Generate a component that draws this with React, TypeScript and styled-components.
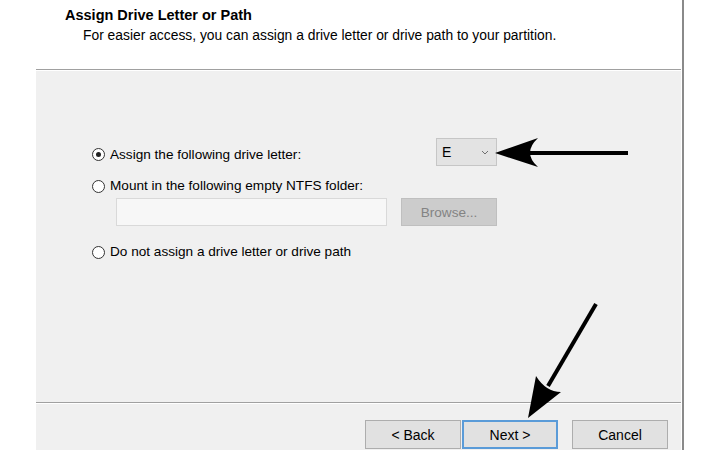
import React from "react";
import styled, { createGlobalStyle } from "styled-components";

const Global = createGlobalStyle`
  html, body { margin: 0; padding: 0; background: #ffffff; }
  body { font-family: "Liberation Sans", Arial, sans-serif; font-size: 13.6px; color: #000; }
  #root { width: 720px; height: 450px; overflow: hidden; position: relative; }
`;

const Page = styled.div`
  width: 720px;
  height: 450px;
  display: flex;
  position: relative;
  background: #ffffff;
`;

const Dialog = styled.div`
  margin-left: 36px;
  width: 645px;
  height: 450px;
  display: flex;
  flex-direction: column;
  border-right: 2px solid #8a8a8a;
  padding-right: 1px;
  background: #ffffff;
`;

const Header = styled.div`
  height: 69px;
  background: #ffffff;
  padding: 7px 0 0 29px;
  box-sizing: border-box;
  display: flex;
  flex-direction: column;
  gap: 3px;
`;

const Title = styled.div`
  font-weight: bold;
  font-size: 14.5px;
  line-height: 17px;
`;

const Subtitle = styled.div`
  font-size: 13.85px;
  line-height: 17px;
  padding-left: 18px;
`;

const Separator = styled.div`
  height: 1px;
  background: #a0a0a0;
  border-bottom: 1px solid #ffffff;
`;

const Body = styled.div`
  height: 331px;
  background: #f0f0f0;
  padding: 67px 0 0 56px;
  box-sizing: border-box;
  display: flex;
  flex-direction: column;
`;

const OptionRow = styled.div<{ $top: number; $h: number }>`
  display: flex;
  align-items: center;
  margin-top: ${(p) => p.$top}px;
  height: ${(p) => p.$h}px;
`;

const Radio = styled.span<{ $checked?: boolean }>`
  width: 11px;
  height: 11px;
  border: 1px solid #333333;
  border-radius: 50%;
  background: #ffffff;
  display: inline-flex;
  align-items: center;
  justify-content: center;
  flex-shrink: 0;
  &::after {
    content: "";
    width: 5px;
    height: 5px;
    border-radius: 50%;
    background: ${(p) => (p.$checked ? "#222222" : "transparent")};
  }
`;

const Label = styled.span`
  margin-left: 5px;
  line-height: 16px;
  white-space: nowrap;
`;

const LabelCell = styled.div`
  width: 344px;
  display: flex;
  align-items: center;
  padding-top: 5px;
`;

const Select = styled.div`
  width: 61px;
  height: 28px;
  box-sizing: border-box;
  background: #e3e3e3;
  border: 1px solid #c6c6c6;
  display: flex;
  align-items: center;
  justify-content: space-between;
  padding: 0 7px 0 5px;
  font-size: 14px;
`;

const FieldRow = styled.div`
  display: flex;
  margin-top: 3px;
  padding-left: 24px;
  gap: 14px;
`;

const TextField = styled.div`
  width: 271px;
  height: 28px;
  box-sizing: border-box;
  background: #f7f7f7;
  border: 1px solid #d9d9d9;
`;

const DisabledButton = styled.div`
  width: 96px;
  height: 28px;
  box-sizing: border-box;
  background: #cccccc;
  border: 1px solid #bfbfbf;
  color: #838383;
  display: flex;
  align-items: center;
  justify-content: center;
`;

const Footer = styled.div`
  flex: 1;
  background: #f0f0f0;
  display: flex;
  align-items: flex-start;
  padding: 16px 0 0 329px;
  box-sizing: border-box;
`;

const Button = styled.div<{ $primary?: boolean; $gap?: number }>`
  width: 96px;
  height: 29px;
  box-sizing: border-box;
  margin-left: ${(p) => p.$gap ?? 0}px;
  background: #e1e1e1;
  border: ${(p) => (p.$primary ? "2px solid #5a9bd8" : "1px solid #adadad")};
  display: flex;
  align-items: center;
  justify-content: center;
  font-size: 14px;
`;

const Overlay = styled.svg`
  position: absolute;
  left: 0;
  top: 0;
  pointer-events: none;
`;

export default function App() {
  return (
    <>
      <Global />
      <Page>
        <Dialog>
          <Header>
            <Title>Assign Drive Letter or Path</Title>
            <Subtitle>For easier access, you can assign a drive letter or drive path to your partition.</Subtitle>
          </Header>
          <Separator />
          <Body>
            <OptionRow $top={0} $h={28}>
              <LabelCell>
                <Radio $checked />
                <Label>Assign the following drive letter:</Label>
              </LabelCell>
              <Select>
                <span>E</span>
                <svg width="8" height="5" viewBox="0 0 8 5">
                  <path d="M1 1 L4 4 L7 1" fill="none" stroke="#707070" strokeWidth="1" />
                </svg>
              </Select>
            </OptionRow>
            <OptionRow $top={11} $h={18}>
              <Radio />
              <Label>Mount in the following empty NTFS folder:</Label>
            </OptionRow>
            <FieldRow>
              <TextField />
              <DisabledButton>Browse...</DisabledButton>
            </FieldRow>
            <OptionRow $top={17} $h={18}>
              <Radio />
              <Label>Do not assign a drive letter or drive path</Label>
            </OptionRow>
          </Body>
          <Separator />
          <Footer>
            <Button>&lt; Back</Button>
            <Button $primary $gap={1}>Next &gt;</Button>
            <Button $gap={14}>Cancel</Button>
          </Footer>
        </Dialog>
        <Overlay width="720" height="450" viewBox="0 0 720 450">
          <line x1="628" y1="153" x2="522" y2="153" stroke="#000" strokeWidth="4" />
          <path d="M495 153 L538 138 Q522 153 538 167 Z" fill="#000" />
          <line x1="596" y1="304" x2="548" y2="386" stroke="#000" strokeWidth="4" />
          <path d="M528 418 L536 376 Q546 392 561 392 Z" fill="#000" />
        </Overlay>
      </Page>
    </>
  );
}
